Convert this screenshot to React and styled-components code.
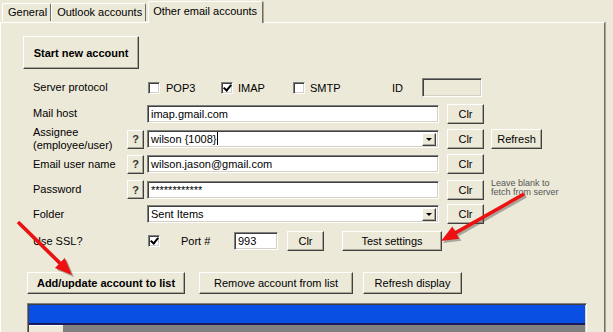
import React from 'react';
import styled, { createGlobalStyle, css } from 'styled-components';

const GlobalStyle = createGlobalStyle`
  html, body {
    margin: 0;
    padding: 0;
    background: #ECE9D8;
  }
  body {
    font-family: "Liberation Sans", Arial, sans-serif;
    font-size: 11px;
    color: #000;
  }
`;

const Window = styled.div`
  position: relative;
  width: 613px;
  height: 332px;
  overflow: hidden;
  background: #ECE9D8;
`;

const TabStrip = styled.div`
  display: flex;
  align-items: flex-end;
  height: 22px;
  padding-left: 2px;
  position: relative;
  z-index: 2;
`;

const Tab = styled.div`
  box-sizing: border-box;
  height: 18px;
  padding: 0 3px 0 5px;
  line-height: 17px;
  border-top: 1px solid #fff;
  border-left: 1px solid #fff;
  border-right: 1px solid #716F64;
  border-top-left-radius: 2px;
  border-top-right-radius: 2px;
  white-space: nowrap;
  margin-bottom: 1px;
  ${p => p.active && css`
    height: 22px;
    padding: 0 5px 0 4px;
    line-height: 19px;
    margin-bottom: -1px;
    margin-left: 2px;
    background: #ECE9D8;
    box-shadow: 1px 0 0 #A7A595;
  `}
`;

const Panel = styled.div`
  box-sizing: border-box;
  width: 605px;
  height: 320px;
  border-top: 1px solid #fff;
  border-left: 1px solid #fff;
  border-right: 1px solid #716F64;
  box-shadow: 1px 0 0 #A7A595;
  padding: 13px 0 0 22px;
`;

const raised = css`
  box-sizing: border-box;
  background: #ECE9D8;
  border: 1px solid;
  border-color: #fff #404040 #404040 #fff;
  box-shadow: inset -1px -1px 0 #ACA899;
  font-family: inherit;
  font-size: 11px;
  color: #000;
  padding: 0;
  cursor: default;
`;

const sunken = css`
  box-sizing: border-box;
  border: 1px solid;
  border-color: #808080 #fff #fff #808080;
  box-shadow: inset 1px 1px 0 #404040, inset -1px -1px 0 #D4D0C8;
`;

const BigButton = styled.button`
  ${raised};
  width: 116px;
  height: 33px;
  font-weight: bold;
  display: block;
`;

const Form = styled.div`
  display: grid;
  grid-template-columns: 94px 20px 300px 44px auto;
  grid-template-rows: 25px 27px 24px 26px 25px 24px 30px;
  align-items: center;
  margin: 6px 0 0 10px;
`;

const Label = styled.div`
  grid-column: ${p => (p.wide ? '1 / 3' : '1')};
  line-height: 13px;
  white-space: nowrap;
`;

const Help = styled.button`
  ${raised};
  width: 17px;
  height: 19px;
  font-size: 11px;
  font-weight: bold;
  color: #333;
  grid-column: 2;
`;

const Field = styled.div`
  ${sunken};
  position: relative;
  grid-column: 3;
  width: ${p => p.w || 292}px;
  height: ${p => p.h || 18}px;
  background: ${p => (p.disabled ? '#ECE9D8' : '#fff')};
  padding: 0 3px;
  line-height: 16px;
  white-space: nowrap;
  overflow: hidden;
`;

const Caret = styled.span`
  display: inline-block;
  width: 1px;
  height: 13px;
  background: #000;
  vertical-align: -2px;
  margin-left: 1px;
`;

const DropButton = styled.div`
  ${raised};
  position: absolute;
  right: 2px;
  top: 2px;
  width: 14px;
  height: 13px;
  display: flex;
  align-items: center;
  justify-content: center;
  &::after {
    content: '';
    border-left: 3px solid transparent;
    border-right: 3px solid transparent;
    border-top: 3px solid #000;
  }
`;

const SmallButton = styled.button`
  ${raised};
  width: ${p => p.w || 37}px;
  height: 20px;
  justify-self: start;
  margin-left: ${p => p.ml || 0}px;
`;

const ClrCell = styled(SmallButton)`
  grid-column: 4;
`;

const Extra = styled.div`
  grid-column: 5;
  justify-self: start;
`;

const Note = styled.div`
  font-size: 9px;
  line-height: 9px;
  color: #555;
  margin-top: -4px;
  white-space: nowrap;
`;

const Inline = styled.div`
  grid-column: 3 / 6;
  display: flex;
  align-items: center;
`;

const Check = styled.span`
  ${sunken};
  display: inline-block;
  position: relative;
  width: 12px;
  height: 12px;
  background: #fff;
  margin: 0 ${p => p.gap || 5}px 0 1px;
  ${p => p.checked && css`
    &::after {
      content: '';
      position: absolute;
      left: 3px;
      top: 0px;
      width: 3px;
      height: 6px;
      border: solid #000;
      border-width: 0 2px 2px 0;
      transform: rotate(40deg);
    }
  `}
`;

const CheckText = styled.span`
  width: ${p => p.w}px;
`;

const ActionRow = styled.div`
  display: flex;
  gap: 14px;
  margin: 16px 0 0 4px;
`;

const ActionButton = styled.button`
  ${raised};
  width: ${p => p.w}px;
  height: 22px;
  font-weight: ${p => (p.bold ? 'bold' : 'normal')};
  margin-right: ${p => p.mr || 0}px;
`;

const List = styled.div`
  ${sunken};
  margin: 9px 0 0 4px;
  width: 560px;
  height: 40px;
  background: #808080;
  padding: 1px 1px 0 1px;
`;

const ListHeader = styled.div`
  height: 18px;
  background: #0A4FE3;
  border-bottom: 2px solid #1A1A5A;
`;

const ListCell = styled.div`
  width: 34px;
  height: 12px;
  background: #ECE9D8;
  border-top: 1px solid #fff;
`;

const Arrows = styled.svg`
  position: absolute;
  left: 0;
  top: 0;
  pointer-events: none;
  z-index: 5;
`;

function Arrow({ x1, y1, x2, y2 }) {
  const dx = x2 - x1;
  const dy = y2 - y1;
  const len = Math.hypot(dx, dy);
  const ux = dx / len;
  const uy = dy / len;
  const bx = x2 - ux * 17;
  const by = y2 - uy * 17;
  const px = -uy * 7;
  const py = ux * 7;
  const head = `${x2},${y2} ${bx + px},${by + py} ${bx - px},${by - py}`;
  return (
    <g>
      <g transform="translate(2,2)" opacity="0.4">
        <line x1={x1} y1={y1} x2={bx} y2={by} stroke="#444" strokeWidth="3.5" />
        <polygon points={head} fill="#444" />
      </g>
      <line x1={x1} y1={y1} x2={bx + ux * 2} y2={by + uy * 2} stroke="#EE1111" strokeWidth="3.5" />
      <polygon points={head} fill="#EE1111" />
    </g>
  );
}

export default function App() {
  return (
    <Window>
      <GlobalStyle />
      <TabStrip>
        <Tab>General</Tab>
        <Tab>Outlook accounts</Tab>
        <Tab active>Other email accounts</Tab>
      </TabStrip>
      <Panel>
        <BigButton>Start new account</BigButton>
        <Form>
          <Label wide>Server protocol</Label>
          <Inline>
            <Check gap={6} />
            <CheckText w={54}>POP3</CheckText>
            <Check gap={5} checked />
            <CheckText w={54}>IMAP</CheckText>
            <Check gap={5} />
            <CheckText w={82}>SMTP</CheckText>
            <CheckText w={30}>ID</CheckText>
            <Field w={60} h={19} disabled />
          </Inline>

          <Label wide>Mail host</Label>
          <Field>imap.gmail.com</Field>
          <ClrCell>Clr</ClrCell>
          <span />

          <Label>Assignee<br />(employee/user)</Label>
          <Help>?</Help>
          <Field>wilson {'{1008}'}<Caret /><DropButton /></Field>
          <ClrCell>Clr</ClrCell>
          <Extra><SmallButton w={51}>Refresh</SmallButton></Extra>

          <Label>Email user name</Label>
          <Help>?</Help>
          <Field>wilson.jason@gmail.com</Field>
          <ClrCell>Clr</ClrCell>
          <span />

          <Label>Password</Label>
          <Help>?</Help>
          <Field>************</Field>
          <ClrCell>Clr</ClrCell>
          <Extra><Note>Leave blank to<br />fetch from server</Note></Extra>

          <Label wide>Folder</Label>
          <Field>Sent Items<DropButton /></Field>
          <ClrCell>Clr</ClrCell>
          <span />

          <Label wide>Use SSL?</Label>
          <Inline>
            <Check gap={21} checked />
            <CheckText w={53}>Port #</CheckText>
            <Field w={44} h={18}>993</Field>
            <SmallButton ml={9}>Clr</SmallButton>
            <SmallButton w={100} ml={18}>Test settings</SmallButton>
          </Inline>
        </Form>
        <ActionRow>
          <ActionButton w={158} bold>Add/update account to list</ActionButton>
          <ActionButton w={154} mr={-4}>Remove account from list</ActionButton>
          <ActionButton w={99}>Refresh display</ActionButton>
        </ActionRow>
        <List>
          <ListHeader />
          <ListCell />
        </List>
      </Panel>
      <Arrows width="613" height="332">
        <Arrow x1={18} y1={222} x2={72} y2={275} />
        <Arrow x1={524} y1={194} x2={441} y2={241} />
      </Arrows>
    </Window>
  );
}
